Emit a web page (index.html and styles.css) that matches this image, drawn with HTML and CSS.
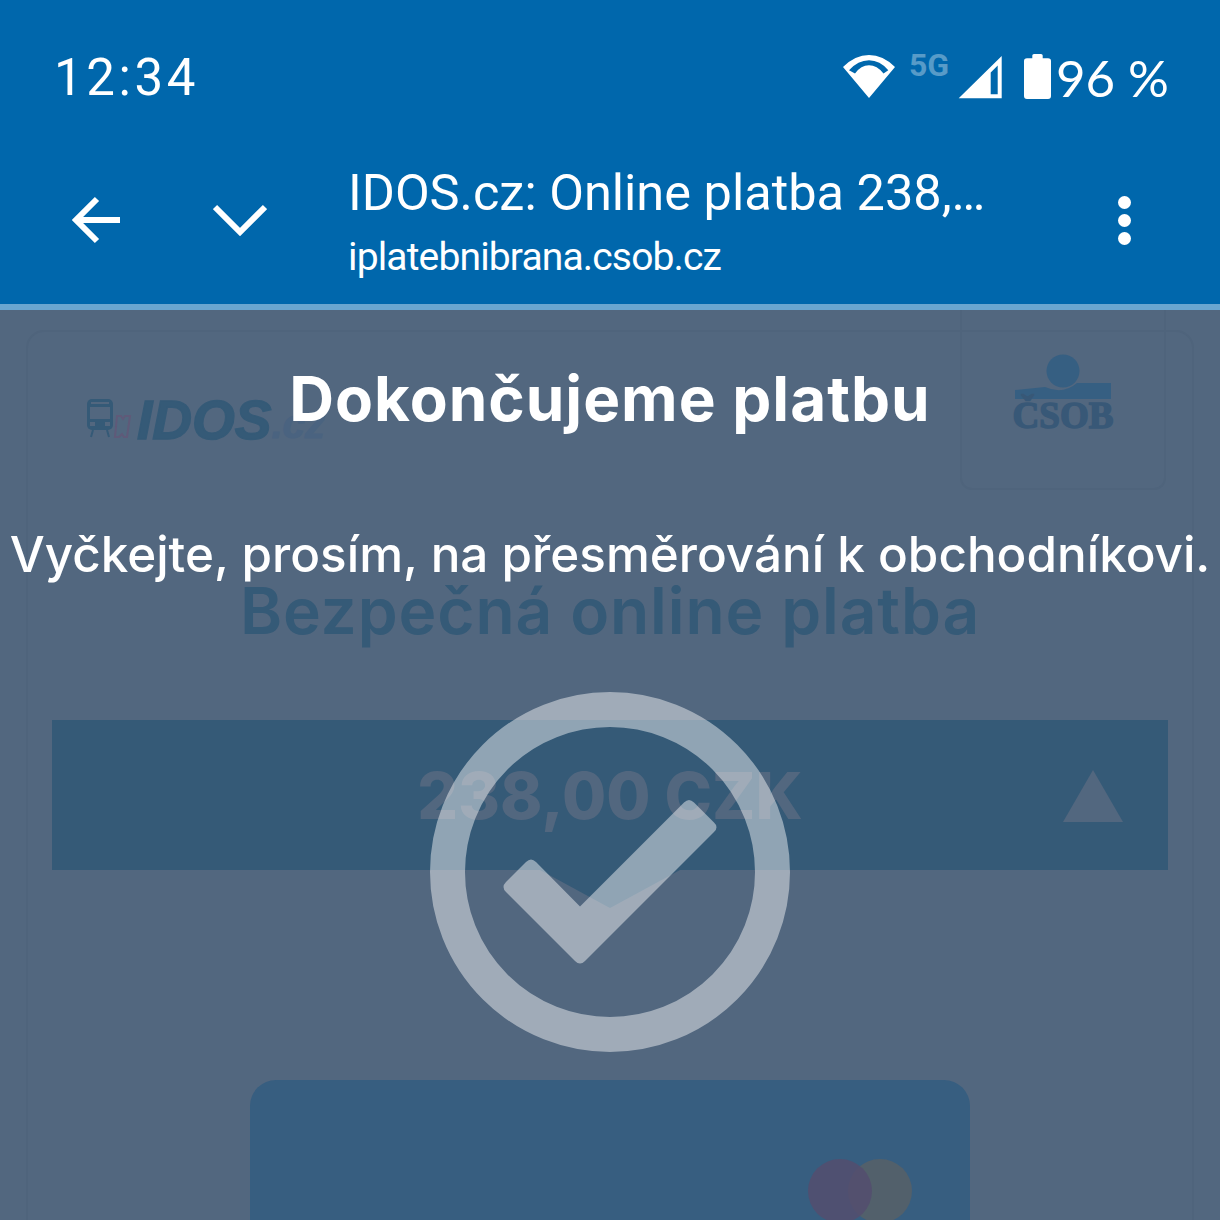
FILE: index.html
```html
<!DOCTYPE html>
<html lang="cs">
<head>
    <meta charset="UTF-8">
    <title>IDOS.cz: Online platba</title>
    <link rel="stylesheet" href="styles.css">
</head>
<body>
    <header class="header">
        <div class="status-bar">
            <span class="time">12:34</span>
            <div class="status-icons">
                <svg class="wifi" width="54" height="46" viewBox="842 53 54 46">
                    <path fill="#fff" fill-rule="evenodd" d="M843 66Q855 54 869 54T895 66L869 97ZM849 69.3Q858 59.3 869 59.3T888.3 69.3L883.5 72.5Q877 64.3 869 64.3T855 72.5Z"/>
                </svg>
                <span class="net">5G</span>
                <svg class="signal" width="44" height="44" viewBox="958 54 44 44">
                    <path fill="#fff" fill-rule="evenodd" d="M958.7 97.3L1001.7 55V97.3ZM997.7 64.5V93.3H990.7V71.5Z"/>
                </svg>
                <svg class="battery" width="28" height="46" viewBox="1024 54 28 46">
                    <path fill="#fff" d="M1032.3 58.3V55.5Q1032.3 54 1034 54H1041Q1042.7 54 1042.7 55.5V58.3H1048Q1051 58.3 1051 61V96Q1051 99 1048 99H1027Q1024 99 1024 96V61Q1024 58.3 1027 58.3Z"/>
                </svg>
                <span class="percent">96 %</span>
            </div>
        </div>
        <div class="toolbar">
            <svg class="icon-back" width="50" height="48" viewBox="0 0 50 48">
                <path fill="none" stroke="#fff" stroke-width="6" d="M26 3L5 24L26 45M5 24H49"/>
            </svg>
            <svg class="icon-down" width="54" height="32" viewBox="0 0 54 32">
                <path fill="none" stroke="#fff" stroke-width="6" d="M2 3L27 28L52 3"/>
            </svg>
            <div class="toolbar-title">
                <div class="title">IDOS.cz: Online platba 238,…</div>
                <div class="url">iplatebnibrana.csob.cz</div>
            </div>
            <div class="menu-dots"><i></i><i></i><i></i></div>
        </div>
    </header>
    <div class="progress"></div>

    <main class="page">
        <div class="card">
            <div class="logos">
                <div class="idos">
                    <svg class="train" width="46" height="44" viewBox="0 0 46 44">
                        <rect x="1" y="1" width="26" height="31" rx="5" fill="#355a77"/>
                        <rect x="5" y="4" width="18" height="2" fill="#52677f"/>
                        <rect x="4" y="9" width="20" height="12" fill="#52677f"/>
                        <rect x="4" y="24" width="5" height="4" fill="#52677f"/>
                        <rect x="19" y="24" width="5" height="4" fill="#52677f"/>
                        <path d="M7 32L5 39M21 32L23 39" stroke="#355a77" stroke-width="2" fill="none"/>
                        <path d="M31 18H35L37 21L39 18H44L41 39H38L36 36L33 39H29Z" fill="none" stroke="#5f5a79" stroke-width="2"/>
                    </svg>
                    <span class="idos-name">IDOS</span><span class="idos-tld">.cz</span>
                </div>
                <div class="bank-box">
                    <svg width="98" height="46" viewBox="0 0 98 46">
                        <circle cx="49" cy="17" r="16.5" fill="#365f82"/>
                        <path d="M1 36L31 33Q49 41 63 29H97V45H1Z" fill="#365f82"/>
                    </svg>
                    <div class="bank-name">ČSOB</div>
                </div>
            </div>
            <h2 class="secure">Bezpečná online platba</h2>
            <div class="amount-bar">
                <span class="amount">238,00 CZK</span>
                <span class="amount-arrow"></span>
            </div>
            <div class="pay-card">
                <div class="mc">
                    <span class="mc-red"></span>
                    <span class="mc-yellow"></span>
                </div>
            </div>
        </div>
    </main>

    <div class="overlay">
        <h1>Dokončujeme platbu</h1>
        <p>Vyčkejte, prosím, na přesměrování k obchodníkovi.</p>
        <svg class="check" width="360" height="360" viewBox="430 692 360 360">
            <circle cx="610" cy="872" r="162.5" fill="none" stroke="#fff" stroke-opacity=".45" stroke-width="35"/>
            <path fill="#fff" fill-opacity=".45" d="M506 892Q501 887 506 882L526 862Q531 857 536 862L580 906.5L684 802.5Q689 797.5 694 802.5L714 822.5Q719 827 714 832L585 961Q580 966 575 961Z"/>
        </svg>
    </div>
</body>
</html>
```

FILE: styles.css
```css
:root {
    --blue: #0067ac;
    --shade: #52677f;
    --dark: #355a77;
}
html, body {
    height: 100%;
}
body {
    margin: 0;
    height: 1220px;
    overflow: hidden;
    position: relative;
    background-color: var(--shade);
    font-family: 'Roboto', sans-serif;
    color: white;
}
.header {
    position: relative;
    z-index: 1;
    height: 304px;
    background-color: var(--blue);
}
.status-bar {
    height: 154px;
    display: flex;
    justify-content: space-between;
    align-items: center;
    padding: 0 51px 0 54px;
    box-sizing: border-box;
}
.time {
    font-size: 51px;
    letter-spacing: 3.6px;
}
.status-icons {
    display: flex;
    align-items: center;
}
.wifi {
    margin-right: 13px;
}
.net {
    font-size: 32px;
    font-weight: 700;
    color: rgba(255,255,255,0.35);
    margin: -24px 8px 0 0;
    width: 41px;
}
.battery {
    margin-left: 22px;
}
.percent {
    font-family: 'Lato', sans-serif;
    font-weight: 400;
    font-size: 51px;
    margin-left: 4px;
}
.toolbar {
    height: 150px;
    display: flex;
    align-items: center;
    padding-left: 71px;
    box-sizing: border-box;
}
.icon-back {
    margin-right: 92px;
    margin-top: -18px;
}
.icon-down {
    margin-right: 81px;
    margin-top: -18px;
}
.toolbar-title {
    flex: 1;
    margin-top: -18px;
}
.title {
    font-size: 50.5px;
    line-height: 64px;
    white-space: nowrap;
}
.url {
    font-size: 39px;
    line-height: 46px;
    letter-spacing: -0.85px;
    margin-top: 9px;
}
.menu-dots {
    display: flex;
    flex-direction: column;
    gap: 5px;
    margin: -18px 89px 0 0;
}
.menu-dots i {
    display: block;
    width: 13px;
    height: 13px;
    border-radius: 50%;
    background-color: white;
}
.progress {
    position: relative;
    z-index: 1;
    height: 6px;
    background-color: #6aa6d0;
}

/* page behind the overlay */
.page {
    height: 910px;
    box-sizing: border-box;
    padding: 20px 26px 0;
    overflow: hidden;
}
.card {
    border: 2px solid #4f647c;
    border-radius: 18px;
    background-color: var(--shade);
    padding: 0 24px;
    height: 1000px;
}
.logos {
    display: flex;
    justify-content: space-between;
    align-items: flex-start;
    margin: -22px 2px 0 0;
    height: 182px;
}
.idos {
    display: flex;
    align-items: center;
    margin: 78px 0 0 34px;
    white-space: nowrap;
}
.idos-name {
    font-family: 'Liberation Sans', sans-serif;
    font-weight: 700;
    font-style: italic;
    font-size: 55px;
    -webkit-text-stroke: 1.5px var(--dark);
    color: var(--dark);
    margin-left: 5px;
}
.idos-tld {
    font-family: 'Liberation Sans', sans-serif;
    font-weight: 700;
    font-style: italic;
    font-size: 40px;
    -webkit-text-stroke: 1px #4a6380;
    color: #4a6380;
    margin-top: 8px;
}
.bank-box {
    width: 206px;
    height: 180px;
    box-sizing: border-box;
    border: 2px solid #4f647c;
    border-top: none;
    border-radius: 0 0 12px 12px;
    display: flex;
    flex-direction: column;
    align-items: center;
    padding-top: 44px;
}
.bank-box svg {
    display: block;
}
.bank-name {
    font-family: 'Liberation Serif', serif;
    font-weight: 700;
    font-size: 37px;
    line-height: 32px;
    -webkit-text-stroke: 1.5px #385877;
    color: #385877;
}
.secure {
    font-family: 'Inter', sans-serif;
    font-weight: 600;
    font-size: 64px;
    line-height: 70px;
    letter-spacing: 0.9px;
    text-align: center;
    color: var(--dark);
    margin: 84px 0 0;
}
.amount-bar {
    position: relative;
    height: 150px;
    margin-top: 74px;
    background-color: var(--dark);
    display: flex;
    align-items: center;
    justify-content: center;
}
.amount-bar::after {
    content: "";
    position: absolute;
    left: 488px;
    top: 100%;
    border-style: solid;
    border-width: 38px 70px 0;
    border-color: var(--dark) transparent transparent;
}
.amount {
    font-family: 'Inter', sans-serif;
    font-weight: 800;
    font-size: 64px;
    color: var(--shade);
}
.amount-arrow {
    position: absolute;
    right: 45px;
    top: 50px;
    border-style: solid;
    border-width: 0 30px 52px;
    border-color: transparent transparent var(--shade);
}
.pay-card {
    width: 720px;
    height: 300px;
    margin: 210px auto 0;
    border-radius: 26px;
    background-color: #375e80;
    display: flex;
    justify-content: flex-end;
}
.mc {
    display: flex;
    margin: 79px 58px 0 0;
}
.mc span {
    display: block;
    width: 64px;
    height: 64px;
    border-radius: 50%;
}
.mc-red {
    position: relative;
    z-index: 1;
    background-color: rgba(84,78,110,0.85);
}
.mc-yellow {
    margin-left: -24px;
    background-color: #52606b;
}

/* redirect notice */
.overlay {
    position: absolute;
    z-index: 2;
    top: 310px;
    left: 0;
    right: 0;
    bottom: 0;
    display: flex;
    flex-direction: column;
    align-items: center;
    text-align: center;
    font-family: 'Inter', sans-serif;
}
.overlay h1 {
    font-size: 62px;
    line-height: 70px;
    letter-spacing: 1px;
    font-weight: 700;
    margin: 54px 0 0;
    white-space: nowrap;
}
.overlay p {
    font-size: 49.4px;
    line-height: 60px;
    font-weight: 500;
    margin: 90px 0 0;
    white-space: nowrap;
}
.check {
    display: block;
    margin-top: 108px;
}
```
